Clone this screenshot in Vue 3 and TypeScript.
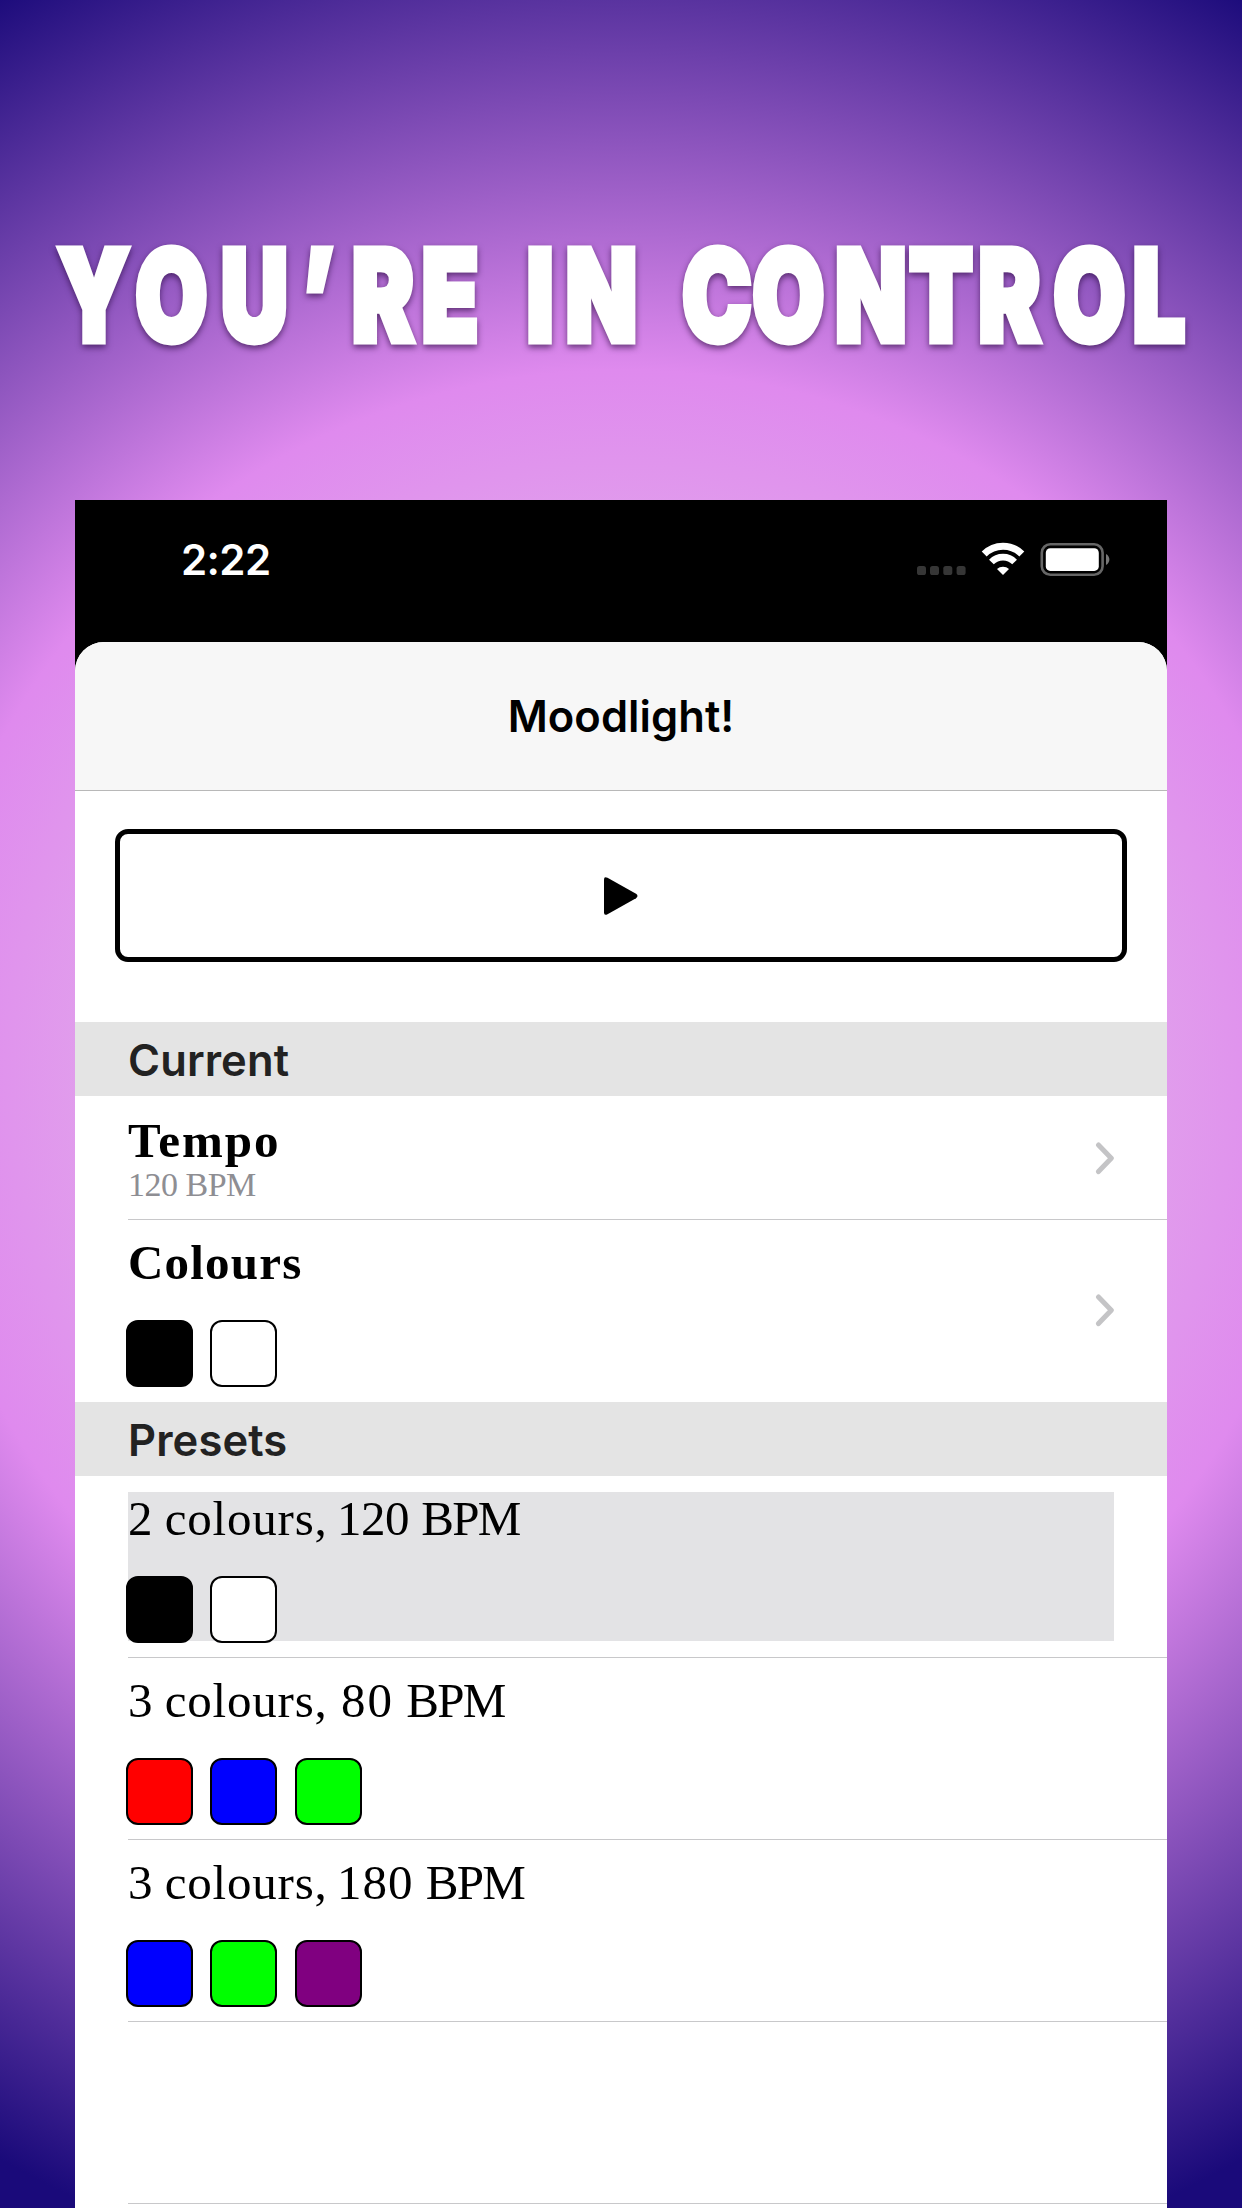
<script setup lang="ts">
interface Preset {
  count: string
  tempo: string
  tracking: number
  inset: number
  colours: string[]
  selected?: boolean
}

interface Word {
  text: string
  centres: number[]
}

// Headline letters are condensed horizontally and centred on these x positions
const CONDENSE = 0.74
const headline: Word[] = [
  { text: 'YOU’RE', centres: [93.5, 171.5, 254.5, 318, 383, 450] },
  { text: 'IN', centres: [540, 601.5] },
  { text: 'CONTROL', centres: [717, 788.5, 871, 941, 1009.5, 1089.5, 1159] },
]

function glyphX(word: Word): string {
  return word.centres.map((c) => (c / CONDENSE).toFixed(1)).join(' ')
}

const current: string[] = ['#000', '#fff']

// tracking and inset are optical corrections for the tempo figures, in px
const presets: Preset[] = [
  { count: '2', tempo: '120', tracking: -0.5, inset: -3, colours: ['#000', '#fff'], selected: true },
  { count: '3', tempo: '80', tracking: 2, inset: 1, colours: ['#f00', '#00f', '#0f0'] },
  { count: '3', tempo: '180', tracking: 1, inset: -3, colours: ['#00f', '#0f0', '#800080'] },
]
</script>

<template>
  <main class="poster">
    <svg class="headline" width="1242" height="200" viewBox="0 0 1242 200">
      <g :transform="`scale(${CONDENSE} 1)`">
        <text v-for="w in headline" :key="w.text" :x="glyphX(w)" y="141">{{ w.text }}</text>
      </g>
    </svg>

    <section class="phone">
      <div class="status">
        <span class="time">2:22</span>
        <svg class="indicators" width="196" height="36" viewBox="0 0 196 36">
          <g fill="#363636">
            <rect x="2" y="24" width="9" height="9" rx="2.6" />
            <rect x="15" y="24" width="9" height="9" rx="2.6" />
            <rect x="28.3" y="24" width="9" height="9" rx="2.6" />
            <rect x="41.6" y="24" width="9" height="9" rx="2.6" />
          </g>
          <g fill="none" stroke="#fff">
            <path d="M69.2 12A26.500 26.500 0 0 1 106.800 12" stroke-width="7" />
            <path d="M76.400 20A16.200 16.200 0 0 1 99.600 20" stroke-width="6.600" />
          </g>
          <path d="M82 27.100A8.600 8.600 0 0 1 94 27.100L88 33.100Z" fill="#fff" />
          <rect x="126.800" y="2.300" width="60.800" height="30.400" rx="8.500" fill="none" stroke="#666" stroke-width="2.600" />
          <rect x="130.800" y="6.300" width="53" height="22.600" rx="4.500" fill="#fff" />
          <path d="M191 12C195.500 14.500 195.500 20.500 191 23Z" fill="#777" />
        </svg>
      </div>

      <div class="sheet">
        <header class="bar"><h1>Moodlight!</h1></header>

        <button class="play" aria-label="Play">
          <svg width="34" height="38" viewBox="0 0 34 38">
            <path d="M0 2.500Q0 -1 3.500 .8L32 16.800Q35 19 32 21.200L3.500 37.200Q0 39 0 35.500Z" />
          </svg>
        </button>

        <h2 class="section">Current</h2>
        <div class="row tempo">
          <div class="copy">
            <div class="name wide">Tempo</div>
            <div class="detail">120 BPM</div>
          </div>
          <svg class="chevron" width="20" height="34" viewBox="0 0 20 34">
            <path d="M4.500 4L17.300 17.300L4.500 30.600" />
          </svg>
        </div>
        <div class="row tall last">
          <div class="copy">
            <div class="name">Colours</div>
            <div class="swatches">
              <i v-for="c in current" :key="c" :style="{ background: c }"></i>
            </div>
          </div>
          <svg class="chevron" width="20" height="34" viewBox="0 0 20 34">
            <path d="M4.500 3L17.300 16.300L4.500 29.600" />
          </svg>
        </div>

        <h2 class="section presets">Presets</h2>
        <div v-for="p in presets" :key="p.tempo" class="row tall">
          <div class="copy" :class="{ selected: p.selected }">
            <div class="label">{{ p.count }} <span class="word">colours,</span> <span :style="{ letterSpacing: p.tracking + 'px', marginLeft: p.inset + 'px' }">{{ p.tempo }}</span> <span class="unit">BPM</span></div>
            <div class="swatches">
              <i v-for="c in p.colours" :key="c" :style="{ background: c }"></i>
            </div>
          </div>
        </div>
        <div class="row tall"></div>
      </div>
    </section>
  </main>
</template>

<style>
body {
  margin: 0;
}
</style>

<style scoped>
* {
  box-sizing: border-box;
}

.poster {
  width: 1242px;
  height: 2208px;
  overflow: hidden;
  background: radial-gradient(circle at 621px 1074px, #e6b2ec 0, #e19fec 520px, #df8aee 704px, #1a0a7a 1250px);
  font-family: Inter, 'Liberation Sans', sans-serif;
}

.headline {
  display: block;
  margin-top: 200px;
  fill: #fff;
  stroke: #fff;
  stroke-width: 6px;
  font: 900 126px Inter, sans-serif;
  text-anchor: middle;
  filter: drop-shadow(0 3px 3px rgba(30, 0, 50, 0.6));
}

.headline text {
  vector-effect: non-scaling-stroke;
}

.phone {
  width: 1092px;
  height: 1708px;
  margin: 100px auto 0;
  background: #000;
}

.status {
  display: flex;
  justify-content: space-between;
  height: 142px;
  padding: 42px 56px 0 106px;
}

.time {
  color: #fff;
  font-size: 42px;
  font-weight: 600;
  line-height: 36px;
  letter-spacing: -0.6px;
}

.sheet {
  height: 1566px;
  overflow: hidden;
  border-radius: 29px 29px 0 0;
  background: #fff;
}

.bar {
  display: flex;
  align-items: center;
  justify-content: center;
  height: 149px;
  border-bottom: 1px solid #b8b8b8;
  background: #f7f7f7;
}

h1 {
  margin: 0;
  font-size: 43.5px;
  font-weight: 600;
  line-height: 50px;
  letter-spacing: 0.05px;
}

.play {
  display: flex;
  align-items: center;
  justify-content: center;
  width: 1012px;
  height: 133px;
  margin: 38px auto 60px;
  padding: 0;
  border: 5px solid #000;
  border-radius: 13px;
  background: #fff;
}

.section {
  height: 74px;
  margin: 0;
  padding-left: 53px;
  background: #e4e4e4;
  color: #222;
  font-size: 43.5px;
  font-weight: 600;
  line-height: 76px;
  letter-spacing: 0.1px;
}

.row {
  position: relative;
  display: flex;
  align-items: center;
  justify-content: space-between;
  height: 182px;
  padding: 0 53px 1px;
  font-family: 'Liberation Serif', serif;
}

.row::after {
  content: '';
  position: absolute;
  right: 0;
  bottom: 0;
  left: 53px;
  height: 1px;
  background: #c8c8ca;
}

.row.tempo {
  height: 124px;
}

.row.last::after {
  display: none;
}

.copy {
  flex: 1;
}

.tall .copy {
  height: 149px;
}

.selected {
  background: #e3e3e5;
}

.name {
  height: 50px;
  font-size: 49px;
  font-weight: 700;
  line-height: 53px;
  letter-spacing: 1.200px;
}

.name.wide {
  letter-spacing: 2px;
}

.detail {
  height: 38px;
  color: #8e8e93;
  font-size: 34px;
  line-height: 42px;
  letter-spacing: -0.5px;
}

.label {
  height: 50px;
  font-size: 49px;
  line-height: 54px;
  white-space: nowrap;
}

.word {
  letter-spacing: 0.8px;
}

.unit {
  letter-spacing: -1.7px;
}

.swatches {
  display: flex;
  gap: 17.400px;
  margin: 34px 0 0 -2px;
}

.swatches i {
  width: 67px;
  height: 67px;
  border: 2.500px solid #000;
  border-radius: 12px;
}

.chevron {
  flex: none;
  fill: none;
  stroke: #c4c4c6;
  stroke-width: 5px;
  stroke-linecap: round;
  stroke-linejoin: round;
}
</style>
